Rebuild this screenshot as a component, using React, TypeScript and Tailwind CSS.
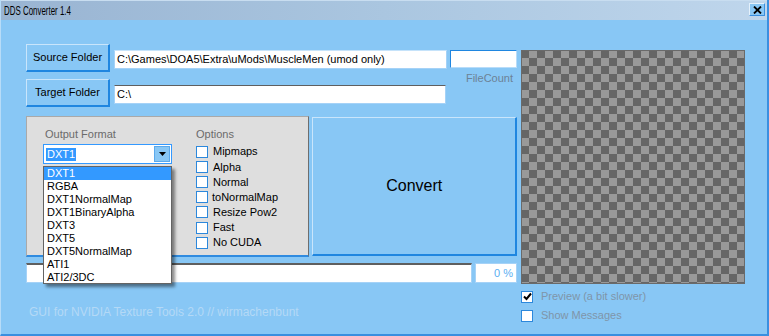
import React from "react";

const formats = [
  "DXT1",
  "RGBA",
  "DXT1NormalMap",
  "DXT1BinaryAlpha",
  "DXT3",
  "DXT5",
  "DXT5NormalMap",
  "ATI1",
  "ATI2/3DC",
];

const options = ["Mipmaps", "Alpha", "Normal", "toNormalMap", "Resize Pow2", "Fast", "No CUDA"];

function FolderButton({ label }: { label: string }) {
  return (
    <button className="w-[84px] h-[28px] shrink-0 bg-[#88c7f5] border border-t-[#c9e5fb] border-l-[#c9e5fb] border-b-2 border-r-2 border-b-[#1f86e0] border-r-[#1f86e0] text-[11px] text-black">
      {label}
    </button>
  );
}

function Check({ checked = false }: { checked?: boolean }) {
  return (
    <span className="w-[12px] h-[12px] shrink-0 bg-white border border-[#2c88dc] flex items-center justify-center">
      {checked && (
        <svg width="9" height="9" viewBox="0 0 9 9">
          <path d="M1 4.5 L3.5 7 L8 1.5" stroke="#000" strokeWidth="2" fill="none" />
        </svg>
      )}
    </span>
  );
}

export default function App() {
  return (
    <div className="w-[769px] h-[336px] bg-[#88c7f5] flex flex-col border-l border-l-[#b7dcf8] border-r-2 border-r-[#3a8fdf] border-b-2 border-b-[#3a8fdf] font-['Liberation_Sans',Arial,sans-serif] overflow-hidden">
      {/* title bar */}
      <div className="h-[20px] shrink-0 flex items-center justify-between bg-[linear-gradient(90deg,#99b4d2_0%,#aac6e0_50%,#bfd6ec_100%)] border-t border-t-[#c8ddf0]">
        <span className="ml-[3px] text-[12px] text-black scale-x-[0.66] origin-left whitespace-nowrap">DDS Converter 1.4</span>
        <span className="mr-[2px] w-[16px] h-[13px] mt-[-2px] bg-[#88c7f5] border border-[#e4f1fc] border-b-[#3a8fdf] border-r-[#3a8fdf] flex items-center justify-center">
          <svg width="9" height="8" viewBox="0 0 9 8">
            <path d="M1 0.5 L8 7.5 M8 0.5 L1 7.5" stroke="#000" strokeWidth="1.8" />
          </svg>
        </span>
      </div>

      <div className="flex pl-[25px] pt-[24px]">
        {/* left column */}
        <div className="w-[491px] flex flex-col">
          <div className="flex h-[28px]">
            <FolderButton label="Source Folder" />
            <div className="ml-[4px] mt-[6px] w-[333px] h-[19px] bg-white border border-[#a5d2f7] border-t-[#c6e3fa] text-[11px] leading-[17px] pl-[2px] text-black whitespace-nowrap">
              C:\Games\DOA5\Extra\uMods\MuscleMen (umod only)
            </div>
            <div className="ml-[3px] mt-[6px] w-[67px] h-[18px] bg-white border border-[#b8dcf9] border-t-[#1f86e0] border-l-[#1f86e0]" />
          </div>

          <div className="flex h-[28px] mt-[7px]">
            <FolderButton label="Target Folder" />
            <div className="ml-[4px] mt-[6px] w-[332px] h-[19px] bg-white border border-[#a5d2f7] border-t-[#5f5f5f] text-[11px] leading-[17px] pl-[2px] text-black">
              C:\
            </div>
            <div className="flex-1 text-right pr-[4px] mt-[-7px] text-[11px] text-[#6c8296] leading-[13px]">FileCount</div>
          </div>

          <div className="flex mt-[9px] h-[141px]">
            {/* options group */}
            <div className="relative w-[284px] h-[141px] bg-[#dedede] border border-t-[#a9a9a9] border-l-[#a9a9a9] border-r-[#6e6e6e] border-b-2 border-b-[#2f8be0] flex">
              <div className="pl-[16px] pt-[11px] w-[169px] shrink-0">
                <div className="pl-[2px] text-[11px] text-[#6b6b6b] leading-[13px]">Output Format</div>
                <div className="mt-[3px] w-[129px] h-[20px] bg-white border border-[#3399ff] flex items-center">
                  <span className="ml-[2px] bg-[#3399ff] text-white text-[11px] leading-[13px] px-[1px]">DXT1</span>
                  <span className="ml-auto mr-[1px] w-[16px] h-[16px] bg-[#88c7f5] border border-[#5ba9ec] flex items-center justify-center">
                    <svg width="7" height="4" viewBox="0 0 7 4">
                      <path d="M0 0 H7 L3.5 4 Z" fill="#000" />
                    </svg>
                  </span>
                </div>
              </div>
              <div className="pt-[11px]">
                <div className="text-[11px] text-[#6b6b6b] leading-[13px]">Options</div>
                <div className="mt-[3px] flex flex-col">
                  {options.map((o) => (
                    <div key={o} className="h-[15.2px] flex items-center gap-[5px] text-[11px] text-black">
                      <Check />
                      <span className={o === "toNormalMap" ? "-ml-[1px]" : ""}>{o}</span>
                    </div>
                  ))}
                </div>
              </div>

              {/* open dropdown list */}
              <div className="absolute left-[16px] top-[49px] w-[129px] h-[118px] bg-white border border-[#646464] shadow-[3px_3px_3px_rgba(0,0,0,0.45)] z-10 flex flex-col">
                {formats.map((f, i) => (
                  <div
                    key={f}
                    className={
                      "h-[13px] leading-[13px] text-[11px] pl-[3px] " +
                      (i === 0 ? "bg-[#3399ff] text-white" : "text-black")
                    }
                  >
                    {f}
                  </div>
                ))}
              </div>
            </div>

            <button className="ml-[3px] mt-[1px] w-[205px] h-[139px] bg-[#88c7f5] border border-t-[#c9e5fb] border-l-[#c9e5fb] border-b-2 border-r-2 border-b-[#1f86e0] border-r-[#1f86e0] text-[16px] text-black">
              Convert
            </button>
          </div>

          <div className="flex mt-[6px] h-[20px]">
            <div className="w-[447px] h-[20px] bg-white border border-[#a5d2f7] border-t-2 border-t-[#5f5f5f]" />
            <div className="ml-[3px] w-[42px] h-[20px] bg-white border border-[#a5d2f7] text-right pr-[3px] text-[11px] leading-[18px] text-[#5aaef2]">
              0 %
            </div>
          </div>

          <div className="mt-[22px] pl-[3px] text-[12px] leading-[14px] text-[#b4d9f6] whitespace-nowrap">
            GUI for NVIDIA Texture Tools 2.0 // wirmachenbunt
          </div>
        </div>

        {/* right column */}
        <div className="ml-[4px] mt-[6px] w-[224px] flex flex-col">
          <div className="w-[224px] h-[234px] border border-[#6a6a6a] bg-[conic-gradient(#999999_25%,#666666_0_50%,#999999_0_75%,#666666_0)] bg-[length:16px_16px] bg-[position:-1px_-1px]" />
          <div className="mt-[6px] flex items-center gap-[8px] h-[13px] text-[11px] text-[#7f95a9]">
            <Check checked />
            <span>Preview (a bit slower)</span>
          </div>
          <div className="mt-[6px] flex items-center gap-[8px] h-[13px] text-[11px] text-[#7f95a9]">
            <Check />
            <span>Show Messages</span>
          </div>
        </div>
      </div>
    </div>
  );
}
